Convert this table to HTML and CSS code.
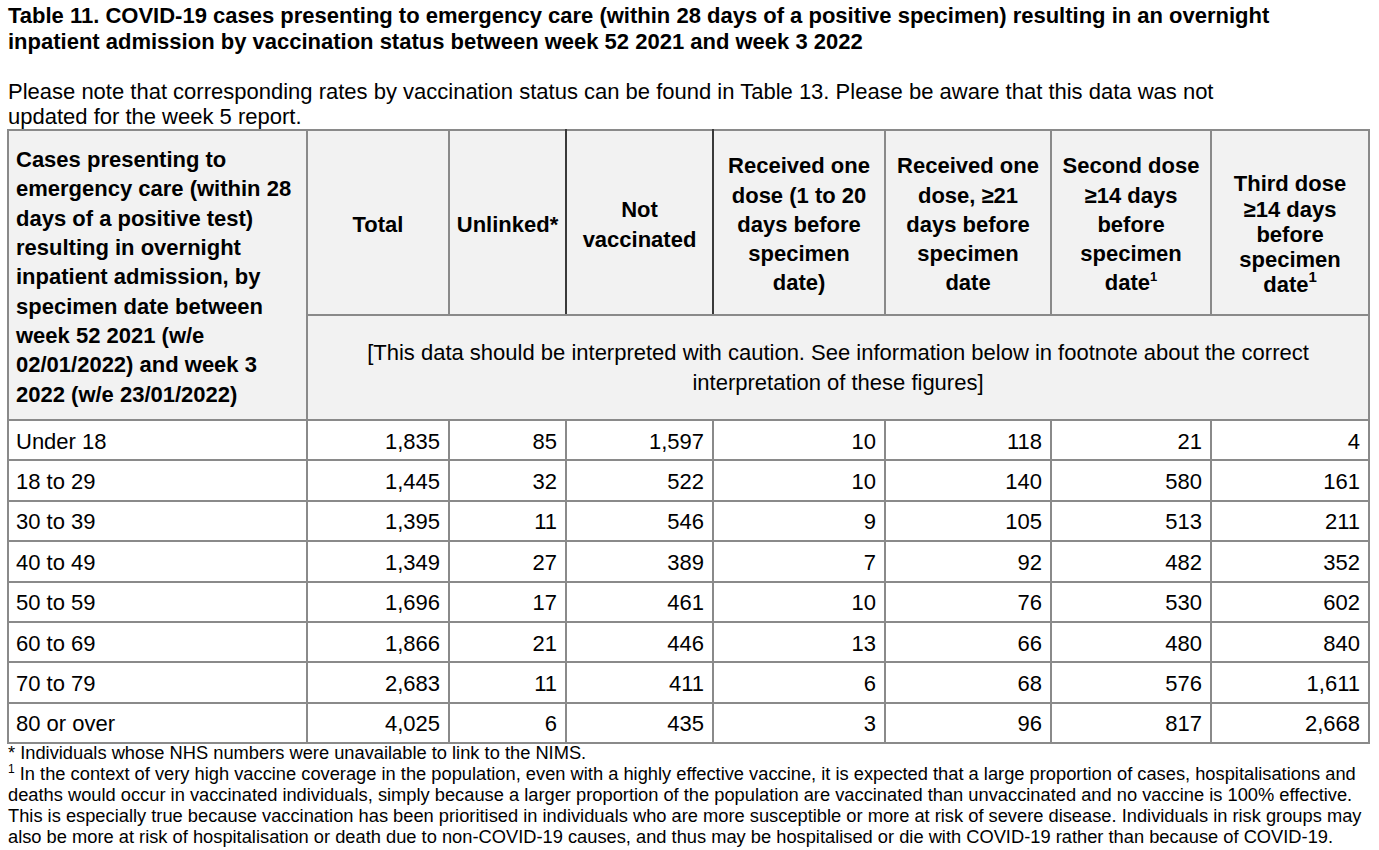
FILE: index.html
```html
<!DOCTYPE html>
<html lang="en">
<head>
<meta charset="utf-8">
<title>Table 11</title>
<link rel="stylesheet" href="styles.css">
</head>
<body>
<h1 class="title">Table 11. COVID-19 cases presenting to emergency care (within 28 days of a positive specimen) resulting in an overnight<br>inpatient admission by vaccination status between week 52 2021 and week 3 2022</h1>
<p class="note">Please note that corresponding rates by vaccination status can be found in Table 13. Please be aware that this data was not<br>updated for the week 5 report.</p>
<table class="data">
  <colgroup>
    <col class="c1"><col class="c2"><col class="c3"><col class="c4"><col class="c5"><col class="c6"><col class="c7"><col class="c8">
  </colgroup>
  <thead>
    <tr class="hrow">
      <th rowspan="2" class="lead">Cases presenting to<br>emergency care (within 28<br>days of a positive test)<br>resulting in overnight<br>inpatient admission, by<br>specimen date between<br>week 52 2021 (w/e<br>02/01/2022) and week 3<br>2022 (w/e 23/01/2022)</th>
      <th>Total</th>
      <th class="dark">Unlinked*</th>
      <th class="dark">Not<br>vaccinated</th>
      <th class="dark-l">Received one<br>dose (1 to 20<br>days before<br>specimen<br>date)</th>
      <th>Received one<br>dose, ≥21<br>days before<br>specimen<br>date</th>
      <th>Second dose<br>≥14 days<br>before<br>specimen<br>date<sup>1</sup></th>
      <th class="tight">Third dose<br>≥14 days<br>before<br>specimen<br>date<sup class="big">1</sup></th>
    </tr>
    <tr class="crow">
      <td colspan="7" class="caution">[This data should be interpreted with caution. See information below in footnote about the correct<br>interpretation of these figures]</td>
    </tr>
  </thead>
  <tbody>
    <tr><td>Under 18</td><td>1,835</td><td>85</td><td>1,597</td><td>10</td><td>118</td><td>21</td><td>4</td></tr>
    <tr><td>18 to 29</td><td>1,445</td><td>32</td><td>522</td><td>10</td><td>140</td><td>580</td><td>161</td></tr>
    <tr><td>30 to 39</td><td>1,395</td><td>11</td><td>546</td><td>9</td><td>105</td><td>513</td><td>211</td></tr>
    <tr><td>40 to 49</td><td>1,349</td><td>27</td><td>389</td><td>7</td><td>92</td><td>482</td><td>352</td></tr>
    <tr><td>50 to 59</td><td>1,696</td><td>17</td><td>461</td><td>10</td><td>76</td><td>530</td><td>602</td></tr>
    <tr><td>60 to 69</td><td>1,866</td><td>21</td><td>446</td><td>13</td><td>66</td><td>480</td><td>840</td></tr>
    <tr><td>70 to 79</td><td>2,683</td><td>11</td><td>411</td><td>6</td><td>68</td><td>576</td><td>1,611</td></tr>
    <tr><td>80 or over</td><td>4,025</td><td>6</td><td>435</td><td>3</td><td>96</td><td>817</td><td>2,668</td></tr>
  </tbody>
</table>
<div class="foot">
  <p>* Individuals whose NHS numbers were unavailable to link to the NIMS.</p>
  <p><sup>1</sup> In the context of very high vaccine coverage in the population, even with a highly effective vaccine, it is expected that a large proportion of cases, hospitalisations and<br>deaths would occur in vaccinated individuals, simply because a larger proportion of the population are vaccinated than unvaccinated and no vaccine is 100% effective.<br>This is especially true because vaccination has been prioritised in individuals who are more susceptible or more at risk of severe disease. Individuals in risk groups may<br>also be more at risk of hospitalisation or death due to non-COVID-19 causes, and thus may be hospitalised or die with COVID-19 rather than because of COVID-19.</p>
</div>
</body>
</html>
```

FILE: styles.css
```css
html, body {
  margin: 0;
  padding: 0;
  background: #ffffff;
  overflow: hidden;
}
body {
  padding: 0 8px;
  font-family: "Liberation Sans", Arial, sans-serif;
  color: #000;
}
.title {
  font-size: 22px;
  font-weight: bold;
  line-height: 26px;
  margin: 3px 0 0 0;
  white-space: nowrap;
}
.note {
  font-size: 22px;
  line-height: 25px;
  margin: 24px 0 0 0;
  white-space: nowrap;
}
.data {
  border-collapse: collapse;
  table-layout: fixed;
  width: 1361px;
  margin-left: -1px;
  font-size: 22px;
}
.c1 { width: 299px; }
.c2 { width: 142px; }
.c3 { width: 117px; }
.c4 { width: 147px; }
.c5 { width: 172px; }
.c6 { width: 166px; }
.c7 { width: 160px; }
.c8 { width: 158px; }
.data th, .data td {
  border: 2px solid #8a8a8a;
  padding: 0 4px;
}
.data thead th, .data thead td {
  background: #f2f2f2;
}
.data th {
  font-weight: bold;
  text-align: center;
  vertical-align: middle;
  line-height: 29.3px;
  white-space: nowrap;
  padding-top: 4px;
}
.data th.lead {
  text-align: left;
  padding: 4px 4px 0 7px;
}
.data th.dark { border-left-color: #3a3a3a; border-right-color: #3a3a3a; }
.data th.dark-l { border-left-color: #3a3a3a; }
.data th.tight { line-height: 25.3px; padding-top: 24px; }
.data sup {
  font-size: 13px;
  line-height: 0;
  vertical-align: 9px;
}
.data sup.big {
  font-size: 15px;
  vertical-align: 10px;
}
.hrow { height: 185px; }
.crow { height: 105px; }
.caution {
  text-align: center;
  line-height: 29.3px;
  white-space: nowrap;
  padding: 4px 4px 0;
}
.data tbody tr { height: 40.4px; }
.data tbody td {
  text-align: right;
  line-height: 24px;
  padding: 3px 8px 0 7px;
}
.data tbody td:first-child { text-align: left; }
.foot {
  font-size: 18.3px;
  line-height: 21px;
  white-space: nowrap;
  margin-top: -2px;
}
.foot p { margin: 0; }
.foot sup {
  font-size: 12px;
  line-height: 0;
  vertical-align: 7px;
}
```
